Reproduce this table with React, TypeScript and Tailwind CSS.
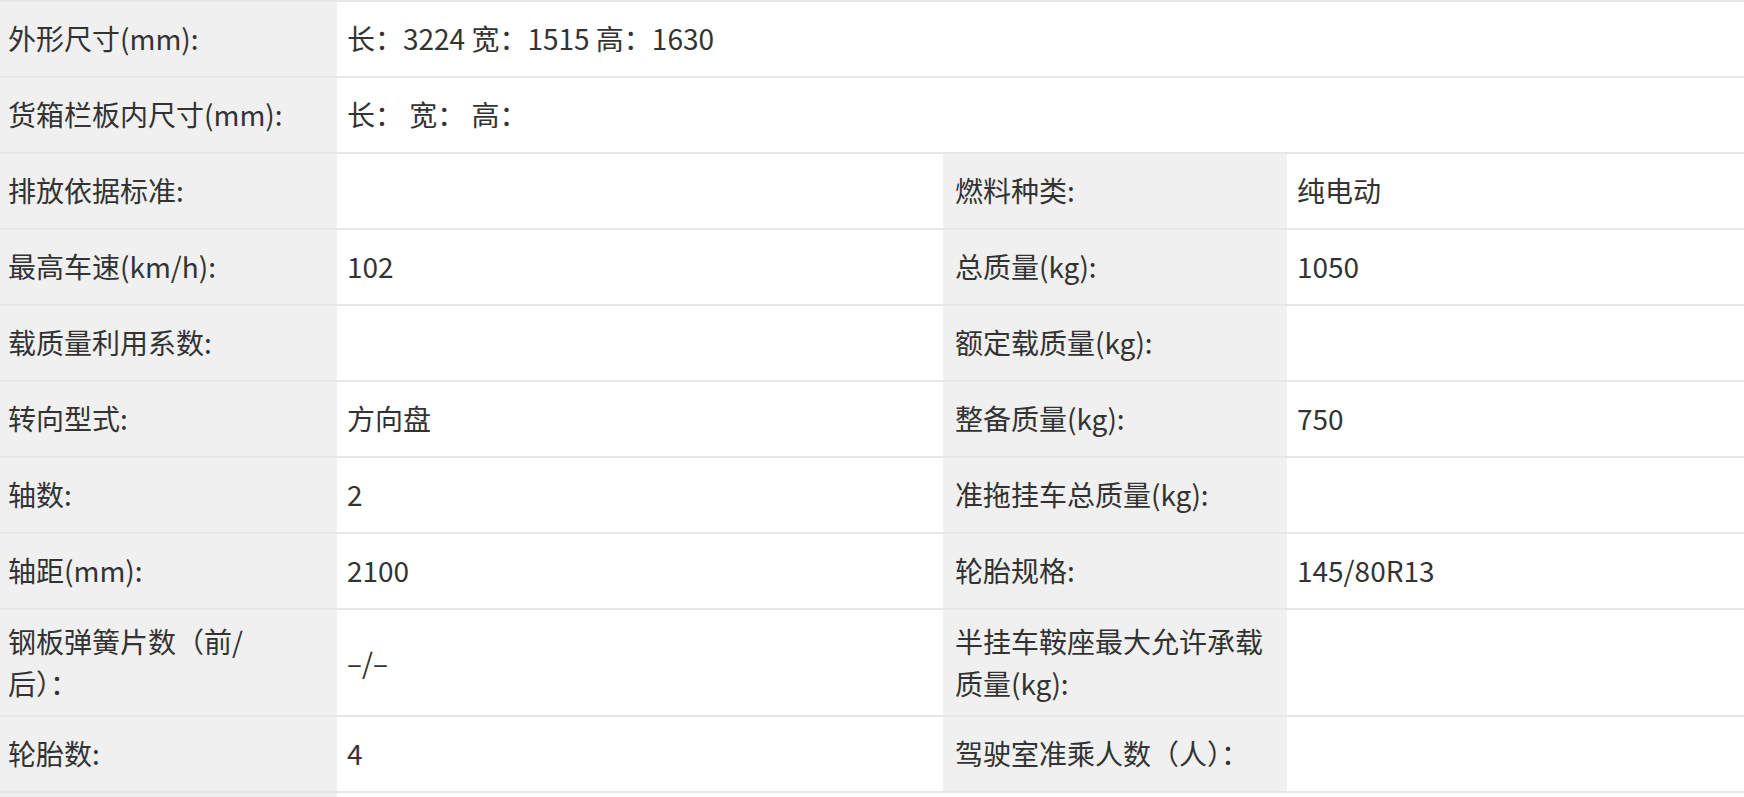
import type { ReactNode } from 'react';

type Pair = { label: ReactNode; value?: ReactNode };

const font = 'font-["Noto_Sans_CJK_SC","PingFang_SC","Liberation_Sans",sans-serif]';

function Label({ children, pl = 'pl-[8px]', pr = 'pr-[20px]' }: { children?: ReactNode; pl?: string; pr?: string }) {
  return (
    <div
      className={`flex items-center min-h-[76px] py-[11px] leading-[41.5px] bg-[#f0f0f0] border-b-2 border-[#e6e6e6] ${pl} ${pr}`}
    >
      <span>{children}</span>
    </div>
  );
}

function Value({ children, wide = false, pl = 'pl-[10px]' }: { children?: ReactNode; wide?: boolean; pl?: string }) {
  return (
    <div
      className={`flex items-center min-h-[76px] py-[11px] leading-[41.5px] bg-white border-b-2 border-[#e6e6e6] ${pl} ${wide ? 'col-span-3' : ''}`}
    >
      <span>{children}</span>
    </div>
  );
}

const rows: [Pair, Pair][] = [
  [{ label: '排放依据标准:' }, { label: '燃料种类:', value: '纯电动' }],
  [{ label: '最高车速(km/h):', value: '102' }, { label: '总质量(kg):', value: '1050' }],
  [{ label: '载质量利用系数:' }, { label: '额定载质量(kg):' }],
  [{ label: '转向型式:', value: '方向盘' }, { label: '整备质量(kg):', value: '750' }],
  [{ label: '轴数:', value: '2' }, { label: '准拖挂车总质量(kg):' }],
  [{ label: '轴距(mm):', value: '2100' }, { label: '轮胎规格:', value: '145/80R13' }],
  [
    {
      label: (
        <>
          钢板弹簧片数（前/
          <br />
          后）：
        </>
      ),
      value: '–/–',
    },
    { label: '半挂车鞍座最大允许承载质量(kg):' },
  ],
  [{ label: '轮胎数:', value: '4' }, { label: '驾驶室准乘人数（人）：' }],
];

export default function App() {
  return (
    <div className={`w-[1744px] h-[797px] overflow-hidden bg-white text-[28px] text-[#333] ${font}`}>
      <div className="grid grid-cols-[337px_606px_344px_1fr] border-t-2 border-[#e6e6e6]">
        <Label>外形尺寸(mm):</Label>
        <Value wide>长：3224 宽：1515 高：1630</Value>

        <Label>货箱栏板内尺寸(mm):</Label>
        <Value wide>长：&nbsp;宽：&nbsp;高：</Value>

        {rows.map(([a, b], i) => (
          <div key={i} className="contents">
            <Label>{a.label}</Label>
            <Value>{a.value}</Value>
            <Label pl="pl-[12px]" pr="pr-[10px]">
              {b.label}
            </Label>
            <Value>{b.value}</Value>
          </div>
        ))}

        <Label />
        <Value wide />
      </div>
    </div>
  );
}
